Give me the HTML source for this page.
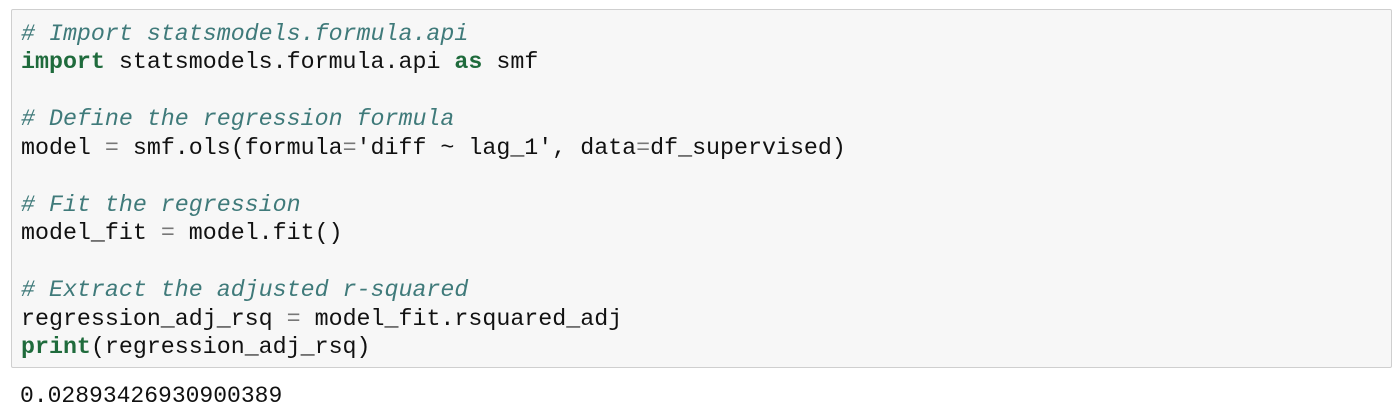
<!DOCTYPE html>
<html><head><style>
body{margin:0;background:#fff;width:1400px;height:413px;overflow:hidden;font-family:"Liberation Mono",monospace;}
.box{position:absolute;left:11px;top:9px;width:1379px;height:357px;background:#f7f7f7;border:1px solid #cfcfcf;border-radius:2px;}
pre{margin:0;position:absolute;left:9px;top:10px;font-family:"Liberation Mono",monospace;font-size:23.3px;line-height:28.45px;color:#111;}
.c{color:#3f7a7a;font-style:italic}
.k{color:#1f6b3c;font-weight:bold}
.o{color:#777}
.out{position:absolute;left:20px;top:382px;font-size:23px;line-height:28px;margin:0;color:#111;}
</style></head><body>
<div class="box"><pre><span class="c"># Import statsmodels.formula.api</span>
<span class="k">import</span> statsmodels.formula.api <span class="k">as</span> smf

<span class="c"># Define the regression formula</span>
model <span class="o">=</span> smf.ols(formula<span class="o">=</span>'diff ~ lag_1', data<span class="o">=</span>df_supervised)

<span class="c"># Fit the regression</span>
model_fit <span class="o">=</span> model.fit()

<span class="c"># Extract the adjusted r-squared</span>
regression_adj_rsq <span class="o">=</span> model_fit.rsquared_adj
<span class="k">print</span>(regression_adj_rsq)</pre></div>
<pre class="out">0.02893426930900389</pre>
</body></html>
